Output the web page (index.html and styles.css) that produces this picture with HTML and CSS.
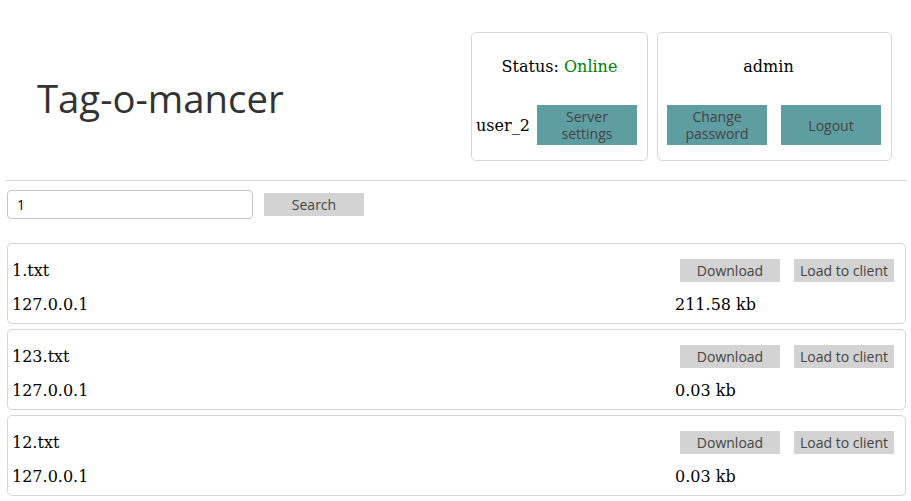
FILE: index.html
```html
<!DOCTYPE html>
<html>
<head>
<meta charset="utf-8">
<link rel="stylesheet" href="styles.css">
</head>
<body>
<header class="header">
  <h1 class="title">Tag-o-mancer</h1>
  <div class="panels">
    <div class="panel panel-server">
      <div class="panel-head">Status:&nbsp;<span class="online">Online</span></div>
      <div class="panel-row">
        <span class="user">user_2</span>
        <button class="btn btn-teal">Server<br>settings</button>
      </div>
    </div>
    <div class="panel panel-user">
      <div class="panel-head">admin</div>
      <div class="panel-row">
        <button class="btn btn-teal">Change<br>password</button>
        <button class="btn btn-teal">Logout</button>
      </div>
    </div>
  </div>
</header>
<div class="search">
  <input class="search-input" type="text" value="1">
  <button class="btn btn-gray">Search</button>
</div>
<div class="files">
  <div class="card">
    <div class="card-row">
      <span class="name">1.txt</span>
      <div class="actions"><button class="btn btn-gray">Download</button><button class="btn btn-gray">Load to client</button></div>
    </div>
    <div class="card-row">
      <span>127.0.0.1</span>
      <span class="size">211.58 kb</span>
    </div>
  </div>
  <div class="card">
    <div class="card-row">
      <span class="name">123.txt</span>
      <div class="actions"><button class="btn btn-gray">Download</button><button class="btn btn-gray">Load to client</button></div>
    </div>
    <div class="card-row">
      <span>127.0.0.1</span>
      <span class="size">0.03 kb</span>
    </div>
  </div>
  <div class="card">
    <div class="card-row">
      <span class="name">12.txt</span>
      <div class="actions"><button class="btn btn-gray">Download</button><button class="btn btn-gray">Load to client</button></div>
    </div>
    <div class="card-row">
      <span>127.0.0.1</span>
      <span class="size">0.03 kb</span>
    </div>
  </div>
</div>
</body>
</html>
```
FILE: styles.css
```css
* { box-sizing: border-box; }
html, body { margin: 0; padding: 0; background: #fff; }
body {
  font-family: "DejaVu Serif", serif;
  font-size: 16px;
  color: #000;
  padding: 0 5px 0 6px;
}
.header {
  display: flex;
  justify-content: space-between;
  align-items: flex-start;
  height: 181px;
  border-bottom: 1px solid #d6d6d6;
  padding: 32px 14px 20px 31px;
}
.title {
  margin: 0;
  margin-top: 43px;
  font-family: "Open Sans", sans-serif;
  font-weight: 400;
  font-size: 38.3px;
  color: #333;
  line-height: 46px;
}
.panels { display: flex; gap: 9px; }
.panel {
  border: 1px solid #d6d6d6;
  border-radius: 5px;
  height: 129px;
  display: flex;
  flex-direction: column;
  padding: 0 10px;
}
.panel-server { width: 177px; }
.panel-server .panel-row { margin-left: -6px; }
.panel-user { width: 235px; padding-left: 9px; }
.panel-user .panel-head { padding-right: 11px; }
.panel-head {
  height: 66px;
  display: flex;
  align-items: center;
  justify-content: center;
}
.online { color: #008000; }
.panel-row {
  margin-top: 6px;
  display: flex;
  align-items: center;
  justify-content: space-between;
}
.btn {
  font-family: "Open Sans", sans-serif;
  font-size: 14px;
  color: #444;
  border: none;
  width: 100px;
  padding: 0;
  margin: 0;
  cursor: pointer;
}
.btn-teal {
  background: #5f9ea0;
  height: 40px;
  line-height: 17px;
}
.btn-gray {
  background: #d3d3d3;
  height: 23px;
  line-height: 23px;
}
.search {
  display: flex;
  align-items: flex-start;
  gap: 11px;
  padding: 9px 0 0 1px;
  height: 62px;
}
.search .btn { margin-top: 3px; }
.search-input {
  width: 246px;
  height: 29px;
  border: 1px solid #c4c4cc;
  border-radius: 4px;
  padding: 0 9px;
  font-family: "Open Sans", sans-serif;
  font-size: 14px;
  color: #000;
  outline: none;
}
.files {
  display: flex;
  flex-direction: column;
  gap: 5px;
  padding: 0 0 0 1px;
}
.card {
  border: 1px solid #d6d6d6;
  border-radius: 5px;
  padding: 10px 5px 2px 4px;
}
.card-row {
  display: grid;
  grid-template-columns: 1fr 225px;
  align-items: center;
}
.card-row:first-child { height: 33px; }
.card-row:last-child { height: 34px; }
.actions {
  display: flex;
  justify-content: flex-end;
  gap: 14px;
  padding-right: 6px;
}
```
